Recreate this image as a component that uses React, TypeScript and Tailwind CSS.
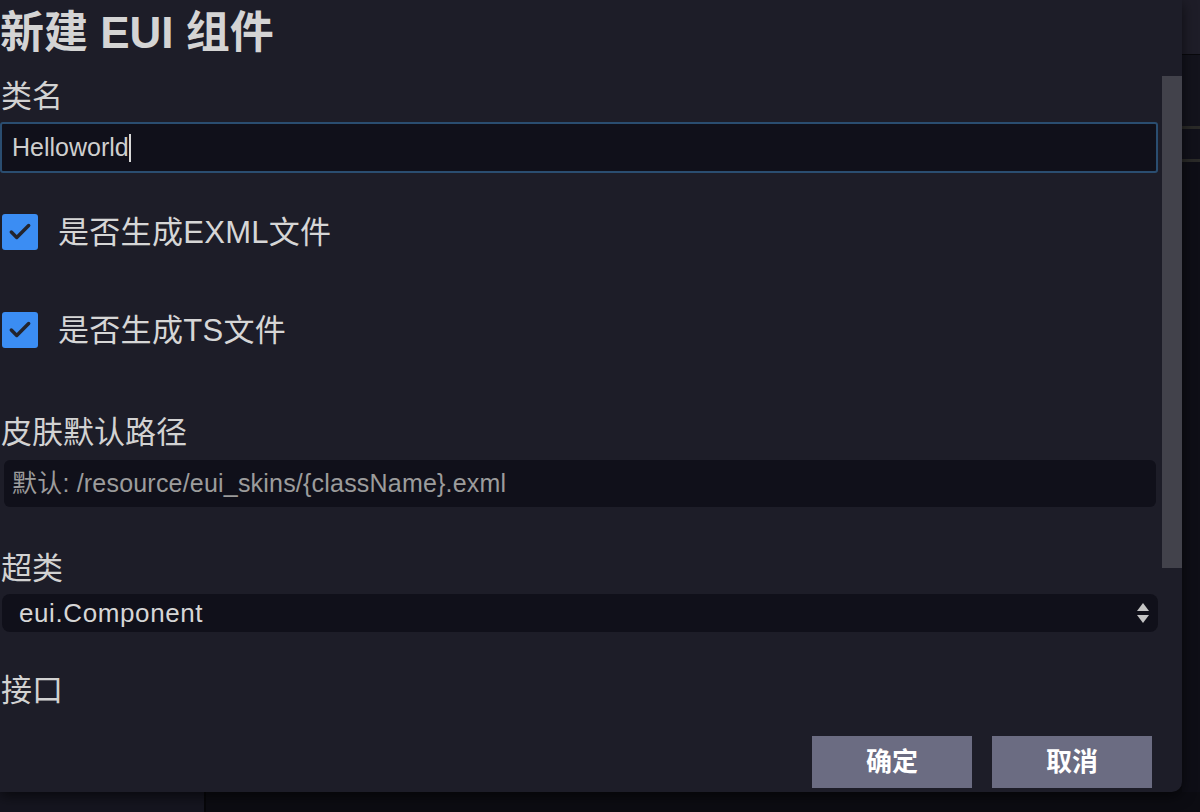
import { Check } from 'lucide-react'

const font = { fontFamily: '"Liberation Sans", "Noto Sans CJK SC", sans-serif' }

function Label({ text, className = '' }: { text: string; className?: string }) {
  return (
    <div className={`h-[40px] flex items-center pl-[1px] text-[31px] leading-none text-[#d2d2d2] ${className}`}>
      {text}
    </div>
  )
}

function CheckRow({ text, className = '' }: { text: string; className?: string }) {
  return (
    <div className={`h-[36px] flex items-center gap-[20px] pl-[2px] ${className}`}>
      <div className="w-[36px] h-[36px] rounded-[3px] bg-[#3b8df3] flex items-center justify-center">
        <Check className="w-[26px] h-[26px] text-[#23242d]" strokeWidth={3.2} />
      </div>
      <span className="text-[31px] leading-none text-[#d6d6d6] tracking-[0.3px]">{text}</span>
    </div>
  )
}

export default function App() {
  return (
    <div className="w-[1200px] h-[812px] bg-[#0c0c12] flex flex-col overflow-hidden" style={font}>
      <div className="flex h-[792px]">
        {/* dialog */}
        <div className="w-[1182px] h-[792px] bg-[#1d1d28] rounded-br-[10px] flex flex-col shadow-[0_4px_14px_rgba(0,0,0,0.6)] relative z-10">
          <div className="h-[66px] flex items-center text-[44px] font-bold leading-none text-[#d4d4d4]">
            新建 EUI 组件
          </div>
          <div className="flex h-[670px]">
            <div className="w-[1158px] overflow-hidden">
              <Label text="类名" className="mt-[10px]" />
              <div className="mt-[6px] h-[51px] border-2 border-[#2a4d70] rounded-[3px] bg-[#10101a] flex items-center pl-[10px]">
                <span className="text-[25px] font-light text-[#cfcfcf]">Helloworld</span>
                <span className="w-[2px] h-[28px] bg-[#d8d8d8]"></span>
              </div>
              <CheckRow text="是否生成EXML文件" className="mt-[41px]" />
              <CheckRow text="是否生成TS文件" className="mt-[62px]" />
              <Label text="皮肤默认路径" className="mt-[64px]" />
              <div className="mt-[8px] ml-[4px] mr-[2px] h-[47px] rounded-[6px] bg-[#10101a] flex items-center pl-[8px]">
                <span className="text-[25px] text-[#9c9c9c] tracking-[0.2px]">默认: /resource/eui_skins/{'{className}'}.exml</span>
              </div>
              <Label text="超类" className="mt-[41px]" />
              <div className="mt-[6px] ml-[2px] h-[38px] rounded-[8px] bg-[#10101a] flex items-center justify-between pl-[17px] pr-[8px]">
                <span className="text-[26px] text-[#d6d6d6] tracking-[0.6px]">eui.Component</span>
                <svg width="14" height="24" viewBox="0 0 14 24" className="text-[#c4c4c4]">
                  <path d="M7 2 L13 10 L1 10 Z" fill="currentColor" />
                  <path d="M1 14 L13 14 L7 22 Z" fill="currentColor" />
                </svg>
              </div>
              <Label text="接口" className="mt-[38px]" />
            </div>
            <div className="w-[4px]"></div>
            <div className="w-[20px]">
              <div className="mt-[10px] h-[492px] bg-[#42424b]"></div>
            </div>
          </div>
          <div className="flex justify-end gap-[20px] pr-[30px]">
            <button className="w-[160px] h-[52px] bg-[#6b6c82] text-white text-[26px] font-bold">确定</button>
            <button className="w-[160px] h-[52px] bg-[#6b6c82] text-white text-[26px] font-bold">取消</button>
          </div>
        </div>
        {/* right strip */}
        <div className="w-[18px] flex flex-col">
          <div className="h-[54px] bg-[#1e1d28]"></div>
          <div className="h-[1px] bg-[#08080c]"></div>
          <div className="h-[71px] bg-[#13131c]"></div>
          <div className="h-[3px] bg-[#2a2a28]"></div>
          <div className="h-[30px] bg-[#11111a]"></div>
          <div className="h-[3px] bg-[#2a2a28]"></div>
          <div className="flex-1 bg-[#0e0e16]"></div>
        </div>
      </div>
      {/* bottom strip */}
      <div className="flex h-[20px]">
        <div className="w-[204px] bg-[#15151f]"></div>
        <div className="w-[2px] bg-[#07070a]"></div>
        <div className="flex-1 bg-[#0c0c12]"></div>
      </div>
    </div>
  )
}
